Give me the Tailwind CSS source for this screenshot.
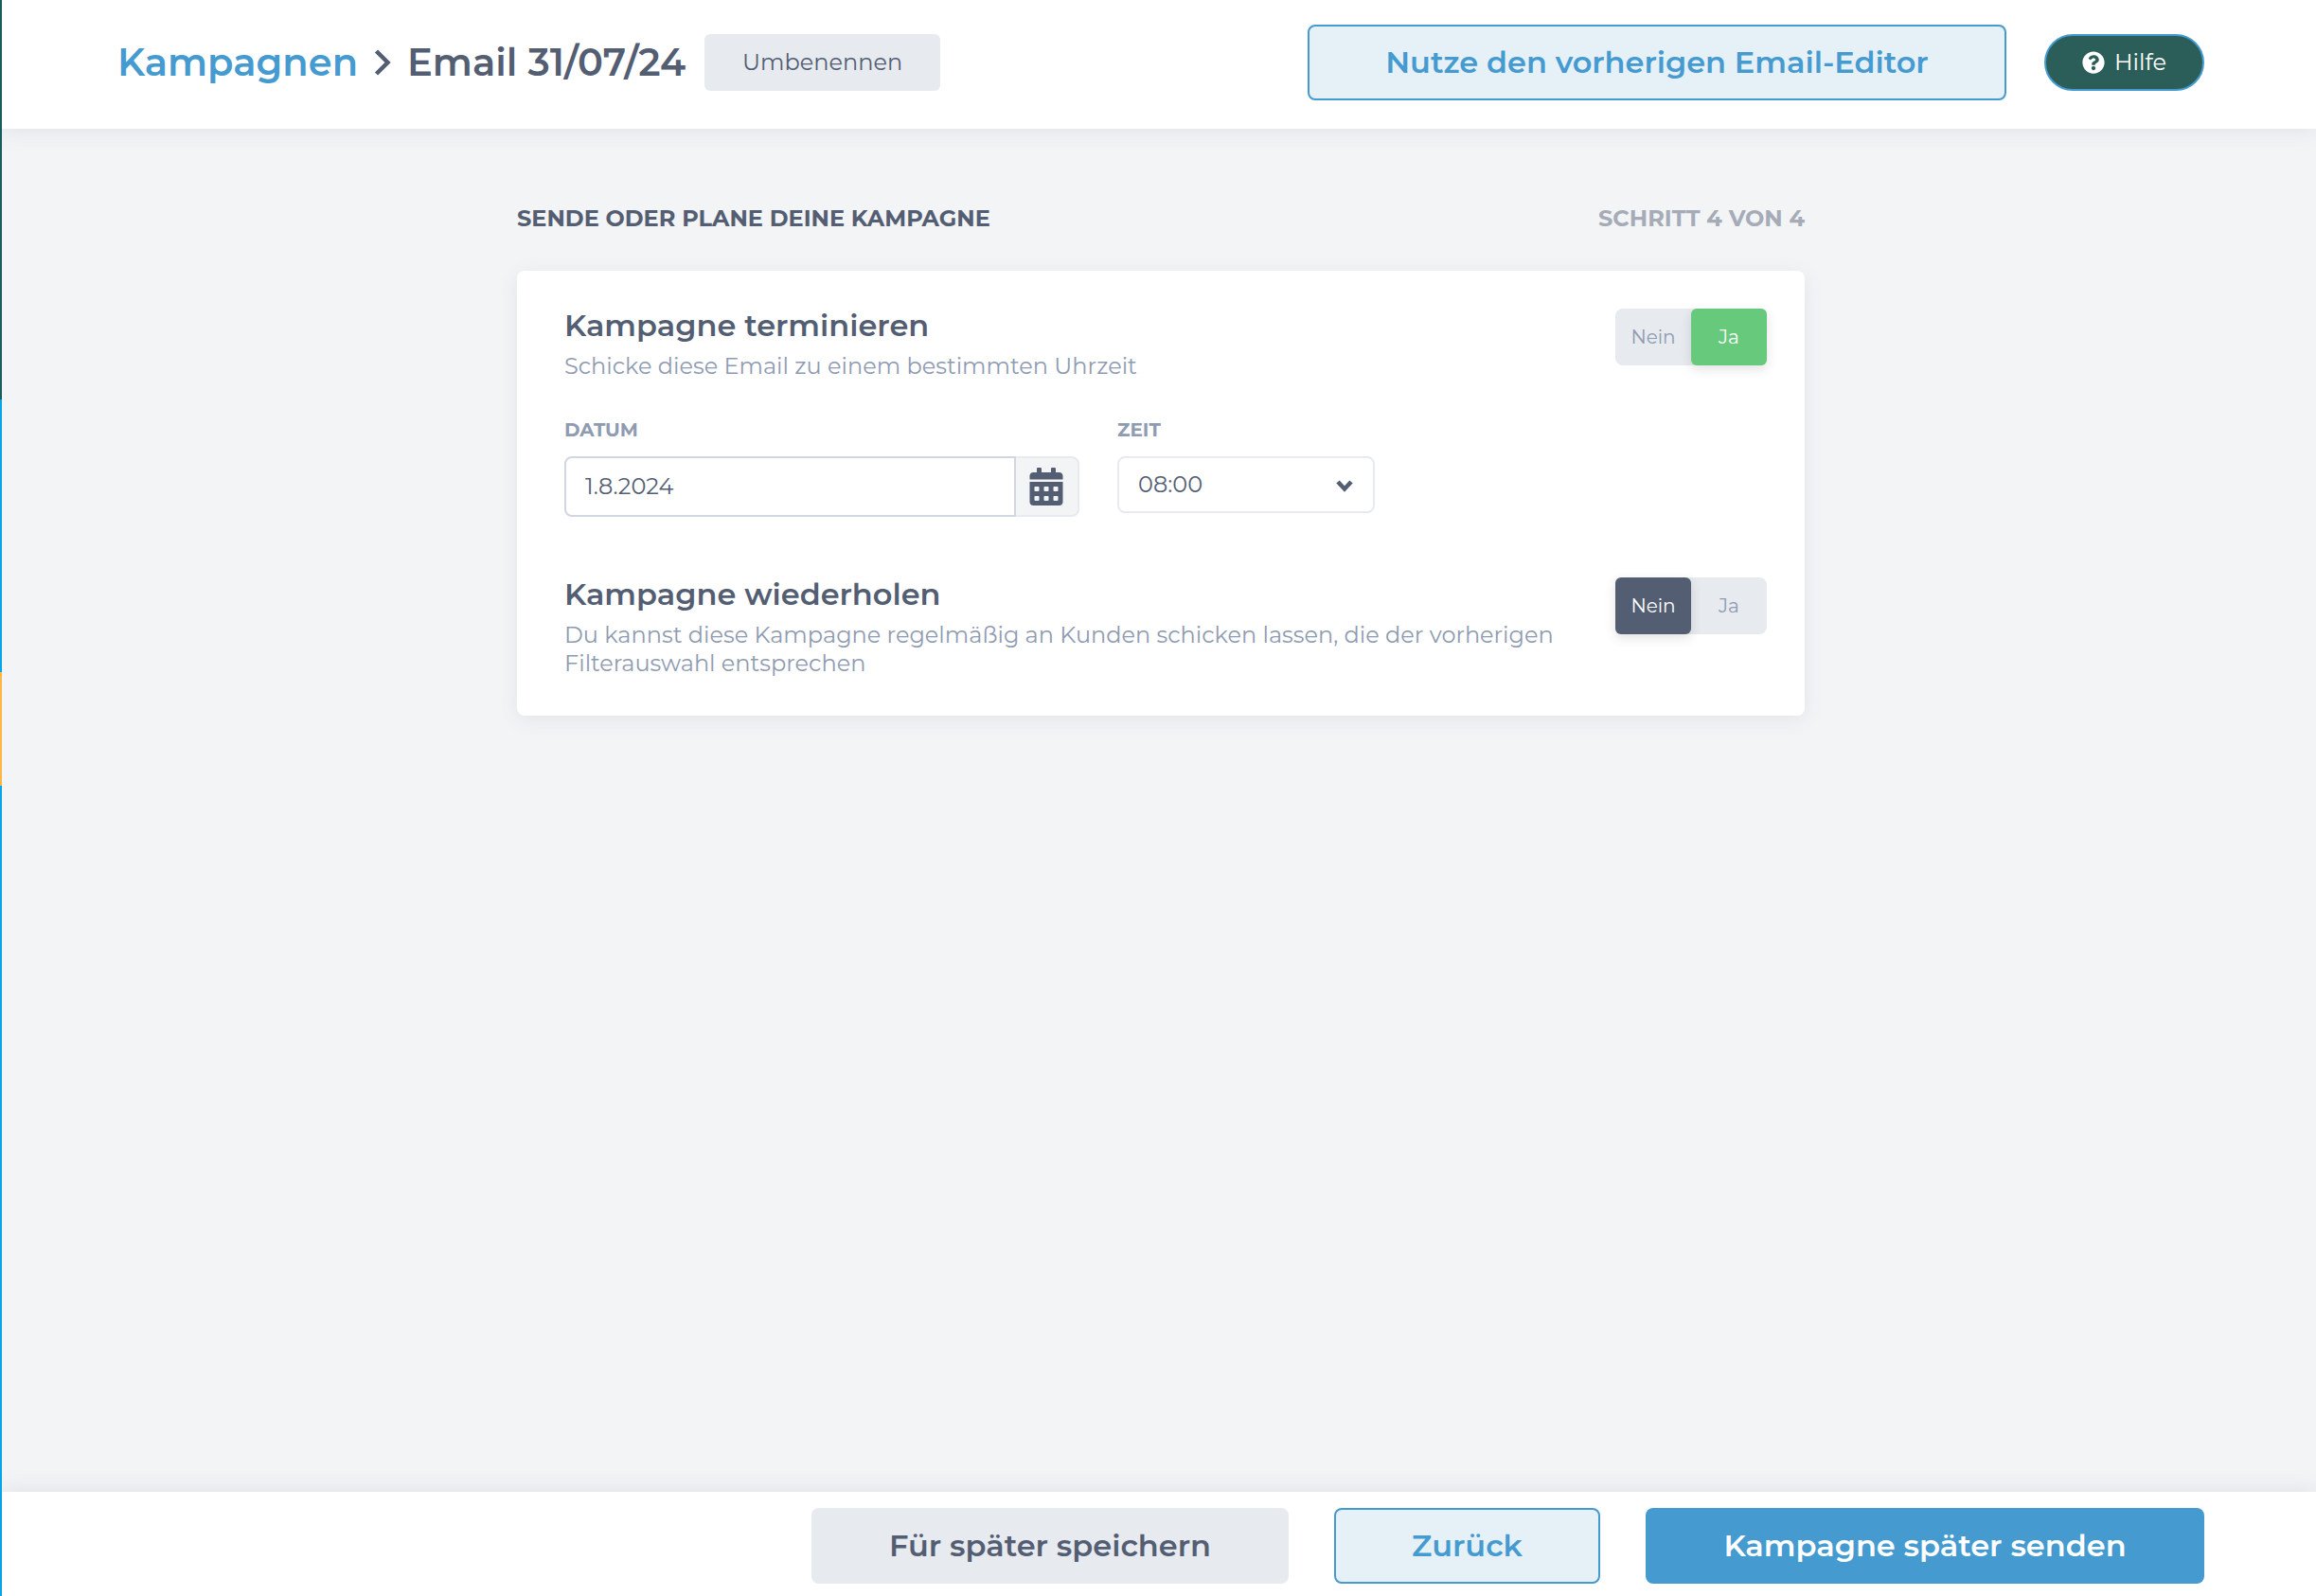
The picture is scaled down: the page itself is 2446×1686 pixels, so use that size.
<!DOCTYPE html>
<html lang="de">
  <head>
    <meta charset="UTF-8" />
    <meta name="viewport" content="width=device-width, initial-scale=1.0" />
    <title>Kampagnen – Email 31/07/24</title>
    <script src="https://cdn.jsdelivr.net/npm/@tailwindcss/browser@4"></script>
  </head>
  <body class="min-h-screen flex bg-[#f3f4f6] text-[#535e73] font-['Montserrat','Inter',sans-serif]">

    <!-- Collapsed sidebar edge -->
    <div class="w-0.5 shrink-0 flex flex-col bg-[#08a5e9]">
      <div class="h-[422px] bg-[#175e5c]"></div>
      <div class="h-72 bg-[#08a5e9]"></div>
      <div class="h-[120px] bg-[#ffb648]"></div>
    </div>

    <div class="flex-1 min-w-0 flex flex-col">

      <!-- Header -->
      <header class="h-[136px] pl-[122px] pr-[118px] pb-1 flex items-center justify-between bg-white shadow-[0_4px_20px_rgba(83,94,115,0.1)]">
        <div class="flex items-center">
          <h1 class="flex items-center text-[40px] leading-[52px] font-semibold">
            <a href="#" class="text-[#459ad0]">Kampagnen</a>
            <svg class="w-5 h-8 mx-4" viewBox="0 0 20 32" fill="none" stroke="currentColor" stroke-width="4.5">
              <path d="M3.500 4l12 12-12 12" />
            </svg>
            <span>Email 31/07/24</span>
          </h1>
          <button type="button" class="ml-5 w-[249px] h-[60px] rounded-md bg-[#e7eaef] text-[24px]">Umbenennen</button>
        </div>
        <div class="flex items-center gap-10">
          <button type="button" class="w-[738px] h-20 rounded-lg border-2 border-[#459ad0] bg-[#e6f1f7] text-[#459ad0] text-[32px] font-semibold">Nutze den vorherigen Email-Editor</button>
          <button type="button" class="w-[169px] h-[60px] flex items-center justify-center gap-2.5 rounded-full border-2 border-[#459ad0] bg-[#2b5e59] text-white text-[24px]">
            <svg class="w-6 h-6" viewBox="0 0 512 512" fill="currentColor">
              <path d="M504 256c0 136.997-111.043 248-248 248S8 392.997 8 256C8 119.083 119.043 8 256 8s248 111.083 248 248zM262.655 90c-54.497 0-89.255 22.957-116.549 63.758-3.536 5.286-2.353 12.415 2.715 16.258l34.699 26.31c5.205 3.947 12.621 3.008 16.665-2.122 17.864-22.658 30.113-35.797 57.303-35.797 20.429 0 45.698 13.148 45.698 32.958 0 14.976-12.363 22.667-32.534 33.976C247.128 238.528 216 254.941 216 296v4c0 6.627 5.373 12 12 12h56c6.627 0 12-5.373 12-12v-1.333c0-28.462 83.186-29.647 83.186-106.667 0-58.002-60.165-102-116.531-102zM256 338c-25.365 0-46 20.635-46 46 0 25.364 20.635 46 46 46s46-20.636 46-46c0-25.365-20.635-46-46-46z" />
            </svg>
            Hilfe
          </button>
        </div>
      </header>

      <!-- Content -->
      <main class="flex-1 pt-20 pl-1">
        <div class="max-w-[1360px] mx-auto">
          <div class="flex items-center justify-between mb-10 text-[24px] leading-[30px] font-bold uppercase">
            <h2>Sende oder plane deine Kampagne</h2>
            <p class="text-[#a5abb7]">Schritt 4 von 4</p>
          </div>

          <div class="rounded-lg bg-white pl-[50px] pr-10 py-10 flex flex-col gap-16 shadow-[0_4px_20px_rgba(83,94,115,0.1)]">

            <!-- Schedule -->
            <section>
              <div class="flex items-start justify-between gap-10">
                <div>
                  <h3 class="text-[32px] leading-9 font-semibold">Kampagne terminieren</h3>
                  <p class="mt-2.5 text-[24px] leading-[30px] text-[#8f9bb1]">Schicke diese Email zu einem bestimmten Uhrzeit</p>
                </div>
                <div role="radiogroup" aria-label="Kampagne terminieren" class="shrink-0 flex rounded-lg bg-[#e7eaef] text-[20px] text-[#8f9bb1]">
                  <label class="w-20 h-[60px] flex items-center justify-center">
                    <input type="radio" name="schedule" value="no" class="sr-only" />Nein
                  </label>
                  <label class="w-20 h-[60px] flex items-center justify-center rounded-md bg-[#66c97b] text-white shadow-[0_4px_12px_rgba(50,60,50,0.15)]">
                    <input type="radio" name="schedule" value="yes" class="sr-only" checked />Ja
                  </label>
                </div>
              </div>

              <div class="mt-10 flex items-start gap-10">
                <div>
                  <label for="date" class="block mb-4 text-[20px] leading-6 font-bold uppercase text-[#8f9bb1]">Datum</label>
                  <div class="flex h-16">
                    <input id="date" type="text" value="1.8.2024" class="w-[477px] px-5 rounded-l-lg border-2 border-[#d1d6e0] bg-white text-[24px]" />
                    <button type="button" aria-label="Kalender öffnen" class="w-[67px] pr-0.5 flex items-center justify-center rounded-r-lg border-2 border-l-0 border-[#e7eaef] bg-[#f3f4f6]">
                      <svg class="w-9 h-10" viewBox="0 0 448 512" fill="currentColor">
                        <path d="M0 464c0 26.5 21.5 48 48 48h352c26.5 0 48-21.5 48-48V192H0v272zm320-196c0-6.600 5.400-12 12-12h40c6.600 0 12 5.400 12 12v40c0 6.600-5.400 12-12 12h-40c-6.600 0-12-5.400-12-12v-40zm0 128c0-6.600 5.400-12 12-12h40c6.600 0 12 5.400 12 12v40c0 6.600-5.400 12-12 12h-40c-6.600 0-12-5.400-12-12v-40zM192 268c0-6.600 5.400-12 12-12h40c6.600 0 12 5.400 12 12v40c0 6.600-5.400 12-12 12h-40c-6.600 0-12-5.400-12-12v-40zm0 128c0-6.600 5.400-12 12-12h40c6.600 0 12 5.400 12 12v40c0 6.600-5.400 12-12 12h-40c-6.600 0-12-5.400-12-12v-40zM64 268c0-6.600 5.400-12 12-12h40c6.600 0 12 5.400 12 12v40c0 6.600-5.400 12-12 12H76c-6.600 0-12-5.400-12-12v-40zm0 128c0-6.600 5.400-12 12-12h40c6.600 0 12 5.400 12 12v40c0 6.600-5.400 12-12 12H76c-6.600 0-12-5.400-12-12v-40zM400 64h-48V16c0-8.800-7.200-16-16-16h-32c-8.800 0-16 7.200-16 16v48H160V16c0-8.800-7.200-16-16-16h-32c-8.800 0-16 7.200-16 16v48H48C21.500 64 0 85.500 0 112v48h448v-48c0-26.500-21.500-48-48-48z" />
                      </svg>
                    </button>
                  </div>
                </div>
                <div>
                  <label for="time" class="block mb-4 text-[20px] leading-6 font-bold uppercase text-[#8f9bb1]">Zeit</label>
                  <div class="relative">
                    <select id="time" class="appearance-none w-[272px] h-[60px] px-5 rounded-lg border-2 border-[#e7eaef] bg-white text-[24px]">
                      <option>08:00</option>
                      <option>09:00</option>
                      <option>10:00</option>
                    </select>
                    <svg class="absolute right-[22px] top-6 w-5 h-4 pointer-events-none" viewBox="0 0 20 16" fill="none" stroke="currentColor" stroke-width="4.5">
                      <path d="M3 3l7 7.500 7-7.500" />
                    </svg>
                  </div>
                </div>
              </div>
            </section>

            <!-- Repeat -->
            <section class="flex items-start justify-between gap-10">
              <div>
                <h3 class="text-[32px] leading-9 font-semibold">Kampagne wiederholen</h3>
                <p class="mt-2.5 text-[24px] leading-[30px] text-[#8f9bb1]">Du kannst diese Kampagne regelmäßig an Kunden schicken lassen, die der vorherigen Filterauswahl entsprechen</p>
              </div>
              <div role="radiogroup" aria-label="Kampagne wiederholen" class="shrink-0 flex rounded-lg bg-[#e7eaef] text-[20px] text-[#8f9bb1]">
                <label class="w-20 h-[60px] flex items-center justify-center rounded-md bg-[#535e73] text-white shadow-[0_4px_12px_rgba(50,60,50,0.15)]">
                  <input type="radio" name="repeat" value="no" class="sr-only" checked />Nein
                </label>
                <label class="w-20 h-[60px] flex items-center justify-center">
                  <input type="radio" name="repeat" value="yes" class="sr-only" />Ja
                </label>
              </div>
            </section>
          </div>
        </div>
      </main>

      <!-- Footer actions -->
      <footer class="h-[110px] pt-1 pr-[118px] flex items-center justify-end gap-12 bg-white shadow-[0_-4px_20px_rgba(83,94,115,0.1)] text-[32px] font-semibold">
        <button type="button" class="w-[504px] h-20 rounded-lg bg-[#e7eaef]">Für später speichern</button>
        <button type="button" class="w-[281px] h-20 rounded-lg border-2 border-[#459ad0] bg-[#e6f1f7] text-[#459ad0]">Zurück</button>
        <button type="button" class="w-[590px] h-20 rounded-lg bg-[#459ad0] text-white">Kampagne später senden</button>
      </footer>
    </div>
  </body>
</html>
